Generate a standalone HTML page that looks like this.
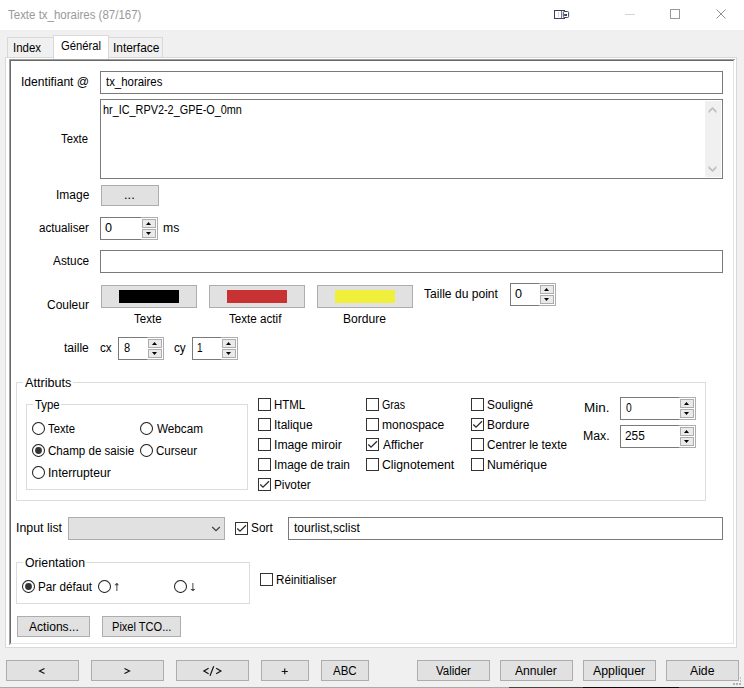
<!DOCTYPE html>
<html><head><meta charset="utf-8"><title>Texte tx_horaires</title>
<style>
html,body{margin:0;padding:0}
body{width:744px;height:688px;background:#f0f0f0;position:relative;overflow:hidden;font-family:"Liberation Sans",sans-serif;font-size:12px;color:#000}
body>div,body>svg,body>span{position:absolute;box-sizing:content-box}
body>span{white-space:nowrap;line-height:14px;transform-origin:0 0;display:block}
</style></head><body>
<div style="left:0px;top:0px;width:744px;height:30px;background:#fff"></div>
<svg style="left:550px;top:6px" width="24" height="18" viewBox="0 0 24 18"><rect x="4.5" y="4.5" width="10" height="8" fill="#fff" stroke="#3d4158" stroke-width="1"/><rect x="8" y="6" width="1" height="5" fill="#d8d8de"/><rect x="11" y="5" width="1" height="7" fill="#777a8c"/><rect x="13.3" y="5.5" width="5.3" height="6" rx="1" fill="#fff" stroke="#3d4158" stroke-width="1"/><rect x="14.2" y="8" width="2.8" height="2" fill="#3d4158"/></svg>
<div style="left:625px;top:14px;width:10px;height:1px;background:#d6d6d6"></div>
<div style="left:670px;top:9px;width:8px;height:8px;border:1px solid #999"></div>
<svg style="left:714px;top:7px" width="14" height="14" viewBox="0 0 14 14"><path d="M2.5 2.5 L11.5 11.5 M11.5 2.5 L2.5 11.5" stroke="#8f8f8f" stroke-width="1" fill="none"/></svg>
<div style="left:5px;top:57px;width:730px;height:589px;border:1px solid #d9d9d9;background:#fff;"></div>
<div style="left:9px;top:59px;width:725px;height:585px;border-left:1px solid #a0a0a0;border-top:1px solid #a0a0a0;background:#fff"></div>
<div style="left:10px;top:60px;width:722px;height:582px;border-left:1px solid #696969;border-top:1px solid #696969;border-right:1px solid #e3e3e3;border-bottom:1px solid #e3e3e3;background:#fff"></div>
<div style="left:7px;top:37px;width:46px;height:19px;border:1px solid #d9d9d9;border-bottom:none;background:#f0f0f0"></div>
<div style="left:108px;top:37px;width:54px;height:19px;border:1px solid #d9d9d9;border-bottom:none;border-left:none;background:#f0f0f0"></div>
<div style="left:53px;top:35px;width:54px;height:23px;border:1px solid #d9d9d9;border-bottom:none;background:#fff"></div>
<div style="left:100px;top:71px;width:621px;height:21px;border:1px solid #7a7a7a;background:#fff;"></div>
<div style="left:100px;top:99px;width:621px;height:78px;border:1px solid #7a7a7a;background:#fff;"></div>
<div style="left:705px;top:101px;width:16px;height:76px;background:#f0f0f0"></div>
<svg style="left:705px;top:101px" width="16" height="16" viewBox="0 0 16 16"><path d="M7.5 5.9 L11.4 9.8 L11.4 12.2 L7.5 8.3 L3.6 12.2 L3.6 9.8 Z" fill="#bdbdbd"/></svg>
<svg style="left:705px;top:161px" width="16" height="16" viewBox="0 0 16 16"><path d="M3.6 4.8 L7.5 8.7 L11.4 4.8 L11.4 7.2 L7.5 11.1 L3.6 7.2 Z" fill="#bdbdbd"/></svg>
<div style="left:100px;top:250px;width:621px;height:21px;border:1px solid #7a7a7a;background:#fff;"></div>
<div style="left:288px;top:517px;width:433px;height:21px;border:1px solid #7a7a7a;background:#fff;"></div>
<div style="left:100px;top:217px;width:56px;height:21px;border:1px solid #7a7a7a;background:#fff;"></div>
<div style="left:141px;top:217px;width:17px;height:1px;background:#abadb3"></div>
<div style="left:141px;top:239px;width:17px;height:1px;background:#abadb3"></div>
<div style="left:157px;top:217px;width:1px;height:23px;background:#abadb3"></div>
<div style="left:142px;top:219px;width:12px;height:7px;border:1px solid #adadad;background:#eaeaea;"></div>
<div style="left:142px;top:229px;width:12px;height:7px;border:1px solid #adadad;background:#eaeaea;"></div>
<svg style="left:142px;top:219px" width="14" height="9" viewBox="0 0 14 9"><path d="M4 6 L9 6 L6.5 3 Z" fill="#000"/></svg>
<svg style="left:142px;top:229px" width="14" height="9" viewBox="0 0 14 9"><path d="M4 3 L9 3 L6.5 6 Z" fill="#000"/></svg>
<div style="left:510px;top:283px;width:44px;height:21px;border:1px solid #7a7a7a;background:#fff;"></div>
<div style="left:539px;top:283px;width:17px;height:1px;background:#abadb3"></div>
<div style="left:539px;top:305px;width:17px;height:1px;background:#abadb3"></div>
<div style="left:555px;top:283px;width:1px;height:23px;background:#abadb3"></div>
<div style="left:540px;top:285px;width:12px;height:7px;border:1px solid #adadad;background:#eaeaea;"></div>
<div style="left:540px;top:295px;width:12px;height:7px;border:1px solid #adadad;background:#eaeaea;"></div>
<svg style="left:540px;top:285px" width="14" height="9" viewBox="0 0 14 9"><path d="M4 6 L9 6 L6.5 3 Z" fill="#000"/></svg>
<svg style="left:540px;top:295px" width="14" height="9" viewBox="0 0 14 9"><path d="M4 3 L9 3 L6.5 6 Z" fill="#000"/></svg>
<div style="left:118px;top:337px;width:44px;height:21px;border:1px solid #7a7a7a;background:#fff;"></div>
<div style="left:147px;top:337px;width:17px;height:1px;background:#abadb3"></div>
<div style="left:147px;top:359px;width:17px;height:1px;background:#abadb3"></div>
<div style="left:163px;top:337px;width:1px;height:23px;background:#abadb3"></div>
<div style="left:148px;top:339px;width:12px;height:7px;border:1px solid #adadad;background:#eaeaea;"></div>
<div style="left:148px;top:349px;width:12px;height:7px;border:1px solid #adadad;background:#eaeaea;"></div>
<svg style="left:148px;top:339px" width="14" height="9" viewBox="0 0 14 9"><path d="M4 6 L9 6 L6.5 3 Z" fill="#000"/></svg>
<svg style="left:148px;top:349px" width="14" height="9" viewBox="0 0 14 9"><path d="M4 3 L9 3 L6.5 6 Z" fill="#000"/></svg>
<div style="left:192px;top:337px;width:44px;height:21px;border:1px solid #7a7a7a;background:#fff;"></div>
<div style="left:221px;top:337px;width:17px;height:1px;background:#abadb3"></div>
<div style="left:221px;top:359px;width:17px;height:1px;background:#abadb3"></div>
<div style="left:237px;top:337px;width:1px;height:23px;background:#abadb3"></div>
<div style="left:222px;top:339px;width:12px;height:7px;border:1px solid #adadad;background:#eaeaea;"></div>
<div style="left:222px;top:349px;width:12px;height:7px;border:1px solid #adadad;background:#eaeaea;"></div>
<svg style="left:222px;top:339px" width="14" height="9" viewBox="0 0 14 9"><path d="M4 6 L9 6 L6.5 3 Z" fill="#000"/></svg>
<svg style="left:222px;top:349px" width="14" height="9" viewBox="0 0 14 9"><path d="M4 3 L9 3 L6.5 6 Z" fill="#000"/></svg>
<div style="left:620px;top:397px;width:74px;height:21px;border:1px solid #7a7a7a;background:#fff;"></div>
<div style="left:679px;top:397px;width:17px;height:1px;background:#abadb3"></div>
<div style="left:679px;top:419px;width:17px;height:1px;background:#abadb3"></div>
<div style="left:695px;top:397px;width:1px;height:23px;background:#abadb3"></div>
<div style="left:680px;top:399px;width:12px;height:7px;border:1px solid #adadad;background:#eaeaea;"></div>
<div style="left:680px;top:409px;width:12px;height:7px;border:1px solid #adadad;background:#eaeaea;"></div>
<svg style="left:680px;top:399px" width="14" height="9" viewBox="0 0 14 9"><path d="M4 6 L9 6 L6.5 3 Z" fill="#000"/></svg>
<svg style="left:680px;top:409px" width="14" height="9" viewBox="0 0 14 9"><path d="M4 3 L9 3 L6.5 6 Z" fill="#000"/></svg>
<div style="left:620px;top:425px;width:74px;height:21px;border:1px solid #7a7a7a;background:#fff;"></div>
<div style="left:679px;top:425px;width:17px;height:1px;background:#abadb3"></div>
<div style="left:679px;top:447px;width:17px;height:1px;background:#abadb3"></div>
<div style="left:695px;top:425px;width:1px;height:23px;background:#abadb3"></div>
<div style="left:680px;top:427px;width:12px;height:7px;border:1px solid #adadad;background:#eaeaea;"></div>
<div style="left:680px;top:437px;width:12px;height:7px;border:1px solid #adadad;background:#eaeaea;"></div>
<svg style="left:680px;top:427px" width="14" height="9" viewBox="0 0 14 9"><path d="M4 6 L9 6 L6.5 3 Z" fill="#000"/></svg>
<svg style="left:680px;top:437px" width="14" height="9" viewBox="0 0 14 9"><path d="M4 3 L9 3 L6.5 6 Z" fill="#000"/></svg>
<div style="left:101px;top:185px;width:56px;height:19px;border:1px solid #adadad;background:#e1e1e1;"></div>
<div style="left:101px;top:285px;width:94px;height:21px;border:1px solid #adadad;background:#e1e1e1;"></div>
<div style="left:119px;top:290px;width:60px;height:13px;background:#000"></div>
<div style="left:209px;top:285px;width:94px;height:21px;border:1px solid #adadad;background:#e1e1e1;"></div>
<div style="left:227px;top:290px;width:60px;height:13px;background:#c83232"></div>
<div style="left:317px;top:285px;width:94px;height:21px;border:1px solid #adadad;background:#e1e1e1;"></div>
<div style="left:335px;top:290px;width:60px;height:13px;background:#f0f03c"></div>
<div style="left:17px;top:616px;width:71px;height:19px;border:1px solid #adadad;background:#e1e1e1;"></div>
<div style="left:102px;top:616px;width:77px;height:19px;border:1px solid #adadad;background:#e1e1e1;"></div>
<div style="left:6px;top:660px;width:71px;height:19px;border:1px solid #adadad;background:#e1e1e1;"></div>
<div style="left:91px;top:660px;width:71px;height:19px;border:1px solid #adadad;background:#e1e1e1;"></div>
<div style="left:176px;top:660px;width:71px;height:19px;border:1px solid #adadad;background:#e1e1e1;"></div>
<div style="left:261px;top:660px;width:46px;height:19px;border:1px solid #adadad;background:#e1e1e1;"></div>
<div style="left:321px;top:660px;width:46px;height:19px;border:1px solid #adadad;background:#e1e1e1;"></div>
<div style="left:417px;top:660px;width:71px;height:19px;border:1px solid #adadad;background:#e1e1e1;"></div>
<div style="left:500px;top:660px;width:71px;height:19px;border:1px solid #adadad;background:#e1e1e1;"></div>
<div style="left:583px;top:660px;width:71px;height:19px;border:1px solid #adadad;background:#e1e1e1;"></div>
<div style="left:666px;top:660px;width:71px;height:19px;border:1px solid #adadad;background:#e1e1e1;"></div>
<div style="left:68px;top:517px;width:155px;height:21px;border:1px solid #adadad;background:#e1e1e1;"></div>
<svg style="left:208px;top:522px" width="16" height="12" viewBox="0 0 16 12"><path d="M4.2 5 L8 8.7 L11.8 5" stroke="#404040" stroke-width="1.2" fill="none"/></svg>
<div style="left:16px;top:382px;width:688px;height:117px;border:1px solid #dcdcdc;background:transparent;"></div>
<div style="left:23px;top:382px;width:50px;height:1px;background:#fff"></div>
<div style="left:26px;top:404px;width:220px;height:84px;border:1px solid #dcdcdc;background:transparent;"></div>
<div style="left:33px;top:404px;width:28px;height:1px;background:#fff"></div>
<div style="left:16px;top:562px;width:232px;height:40px;border:1px solid #dcdcdc;background:transparent;"></div>
<div style="left:23px;top:562px;width:63px;height:1px;background:#fff"></div>
<svg style="left:32px;top:422px" width="13" height="13" viewBox="0 0 13 13"><circle cx="6.5" cy="6.5" r="6" fill="#fff" stroke="#2e2e2e" stroke-width="1.07"/></svg>
<svg style="left:32px;top:444px" width="13" height="13" viewBox="0 0 13 13"><circle cx="6.5" cy="6.5" r="6" fill="#fff" stroke="#2e2e2e" stroke-width="1.07"/><circle cx="6.5" cy="6.5" r="3.4" fill="#333"/></svg>
<svg style="left:32px;top:466px" width="13" height="13" viewBox="0 0 13 13"><circle cx="6.5" cy="6.5" r="6" fill="#fff" stroke="#2e2e2e" stroke-width="1.07"/></svg>
<svg style="left:140px;top:422px" width="13" height="13" viewBox="0 0 13 13"><circle cx="6.5" cy="6.5" r="6" fill="#fff" stroke="#2e2e2e" stroke-width="1.07"/></svg>
<svg style="left:140px;top:444px" width="13" height="13" viewBox="0 0 13 13"><circle cx="6.5" cy="6.5" r="6" fill="#fff" stroke="#2e2e2e" stroke-width="1.07"/></svg>
<svg style="left:22px;top:580px" width="13" height="13" viewBox="0 0 13 13"><circle cx="6.5" cy="6.5" r="6" fill="#fff" stroke="#2e2e2e" stroke-width="1.07"/><circle cx="6.5" cy="6.5" r="3.4" fill="#333"/></svg>
<svg style="left:98px;top:580px" width="13" height="13" viewBox="0 0 13 13"><circle cx="6.5" cy="6.5" r="6" fill="#fff" stroke="#2e2e2e" stroke-width="1.07"/></svg>
<svg style="left:174px;top:580px" width="13" height="13" viewBox="0 0 13 13"><circle cx="6.5" cy="6.5" r="6" fill="#fff" stroke="#2e2e2e" stroke-width="1.07"/></svg>
<svg style="left:258px;top:398px" width="13" height="13" viewBox="0 0 13 13"><rect x="0.5" y="0.5" width="12" height="12" fill="#fff" stroke="#333" stroke-width="1"/></svg>
<svg style="left:258px;top:418px" width="13" height="13" viewBox="0 0 13 13"><rect x="0.5" y="0.5" width="12" height="12" fill="#fff" stroke="#333" stroke-width="1"/></svg>
<svg style="left:258px;top:438px" width="13" height="13" viewBox="0 0 13 13"><rect x="0.5" y="0.5" width="12" height="12" fill="#fff" stroke="#333" stroke-width="1"/></svg>
<svg style="left:258px;top:458px" width="13" height="13" viewBox="0 0 13 13"><rect x="0.5" y="0.5" width="12" height="12" fill="#fff" stroke="#333" stroke-width="1"/></svg>
<svg style="left:258px;top:478px" width="13" height="13" viewBox="0 0 13 13"><rect x="0.5" y="0.5" width="12" height="12" fill="#fff" stroke="#333" stroke-width="1"/><path d="M2.3 6.5 L5 9.2 L11 3.2" stroke="#2a2a2a" stroke-width="1.25" fill="none"/></svg>
<svg style="left:366px;top:398px" width="13" height="13" viewBox="0 0 13 13"><rect x="0.5" y="0.5" width="12" height="12" fill="#fff" stroke="#333" stroke-width="1"/></svg>
<svg style="left:366px;top:418px" width="13" height="13" viewBox="0 0 13 13"><rect x="0.5" y="0.5" width="12" height="12" fill="#fff" stroke="#333" stroke-width="1"/></svg>
<svg style="left:366px;top:438px" width="13" height="13" viewBox="0 0 13 13"><rect x="0.5" y="0.5" width="12" height="12" fill="#fff" stroke="#333" stroke-width="1"/><path d="M2.3 6.5 L5 9.2 L11 3.2" stroke="#2a2a2a" stroke-width="1.25" fill="none"/></svg>
<svg style="left:366px;top:458px" width="13" height="13" viewBox="0 0 13 13"><rect x="0.5" y="0.5" width="12" height="12" fill="#fff" stroke="#333" stroke-width="1"/></svg>
<svg style="left:471px;top:398px" width="13" height="13" viewBox="0 0 13 13"><rect x="0.5" y="0.5" width="12" height="12" fill="#fff" stroke="#333" stroke-width="1"/></svg>
<svg style="left:471px;top:418px" width="13" height="13" viewBox="0 0 13 13"><rect x="0.5" y="0.5" width="12" height="12" fill="#fff" stroke="#333" stroke-width="1"/><path d="M2.3 6.5 L5 9.2 L11 3.2" stroke="#2a2a2a" stroke-width="1.25" fill="none"/></svg>
<svg style="left:471px;top:438px" width="13" height="13" viewBox="0 0 13 13"><rect x="0.5" y="0.5" width="12" height="12" fill="#fff" stroke="#333" stroke-width="1"/></svg>
<svg style="left:471px;top:458px" width="13" height="13" viewBox="0 0 13 13"><rect x="0.5" y="0.5" width="12" height="12" fill="#fff" stroke="#333" stroke-width="1"/></svg>
<svg style="left:235px;top:522px" width="13" height="13" viewBox="0 0 13 13"><rect x="0.5" y="0.5" width="12" height="12" fill="#fff" stroke="#333" stroke-width="1"/><path d="M2.3 6.5 L5 9.2 L11 3.2" stroke="#2a2a2a" stroke-width="1.25" fill="none"/></svg>
<svg style="left:260px;top:573px" width="13" height="13" viewBox="0 0 13 13"><rect x="0.5" y="0.5" width="12" height="12" fill="#fff" stroke="#333" stroke-width="1"/></svg>
<svg style="left:112px;top:581px" width="10" height="12" viewBox="0 0 10 12"><rect x="4" y="4" width="1" height="6" fill="#8c8c8c"/><rect x="5" y="4" width="1" height="6" fill="#b8b8b8"/><path d="M2.4 4.3 L6.9 4.3 L5.3 2.1 L4.5 2.1 Z" fill="#4a4a4a"/></svg>
<svg style="left:188px;top:581px" width="10" height="12" viewBox="0 0 10 12"><rect x="4" y="2" width="1" height="6" fill="#8c8c8c"/><rect x="5" y="2" width="1" height="6" fill="#b8b8b8"/><path d="M2.3 7.9 L7.2 7.9 L5.5 10 L4.6 10 Z" fill="#4a4a4a"/></svg>
<svg style="left:36px;top:665px" width="12" height="12" viewBox="0 0 12 12"><path d="M8.5 3.5 L3.5 6 L8.5 8.5" stroke="#111" stroke-width="1.2" fill="none"/></svg>
<svg style="left:121px;top:665px" width="12" height="12" viewBox="0 0 12 12"><path d="M3.5 3.5 L8.5 6 L3.5 8.5" stroke="#111" stroke-width="1.2" fill="none"/></svg>
<svg style="left:200px;top:664px" width="26" height="14" viewBox="0 0 26 14"><path d="M8.6 4.3 L3.9 7 L8.6 9.7 M13.7 2.2 L10 11.9 M16.2 4.3 L20.9 7 L16.2 9.7" stroke="#111" stroke-width="1.2" fill="none"/></svg>
<svg style="left:279px;top:665px" width="12" height="12" viewBox="0 0 12 12"><path d="M2.7 6.5 L8.8 6.5 M5.75 3.6 L5.75 9.3" stroke="#111" stroke-width="1.15" fill="none"/></svg>
<div style="left:733px;top:683px;width:2px;height:2px;background:#b2b2b2"></div>
<div style="left:736px;top:683px;width:2px;height:2px;background:#b2b2b2"></div>
<div style="left:739px;top:683px;width:2px;height:2px;background:#b2b2b2"></div>
<div style="left:740px;top:680px;width:1px;height:2px;background:#bebebe"></div>
<div style="left:740px;top:677px;width:1px;height:2px;background:#bebebe"></div>
<div style="left:0px;top:687px;width:509px;height:1px;background:#aaaaaa"></div>
<div style="left:509px;top:687px;width:74px;height:1px;background:#3f4a40"></div>
<div style="left:583px;top:687px;width:96px;height:1px;background:#0c0c0c"></div>
<div style="left:679px;top:687px;width:65px;height:1px;background:#46564a"></div>
<span style="left:7.66px;top:8px;color:#999;transform:scaleX(0.9568)">Texte tx_horaires (87/167)</span>
<span style="left:12.77px;top:41px;transform:scaleX(0.9571)">Index</span>
<span style="left:60.88px;top:39px;transform:scaleX(0.9388)">Général</span>
<span style="left:113.21px;top:41px;transform:scaleX(0.9928)">Interface</span>
<span style="left:21.18px;top:75px;transform:scaleX(1.0083)">Identifiant @</span>
<span style="left:106.34px;top:75px;transform:scaleX(0.9503)">tx_horaires</span>
<span style="left:102.68px;top:103px;transform:scaleX(0.9055)">hr_IC_RPV2-2_GPE-O_0mn</span>
<span style="left:60.70px;top:132px;transform:scaleX(0.9375)">Texte</span>
<span style="left:55.68px;top:188px;transform:scaleX(0.9992)">Image</span>
<span style="left:124.01px;top:188px;transform:scaleX(1.0720)">...</span>
<span style="left:38.95px;top:221px;transform:scaleX(0.9710)">actualiser</span>
<span style="left:105.06px;top:221px;transform:scaleX(1.0508)">0</span>
<span style="left:162.99px;top:221px;transform:scaleX(1.0155)">ms</span>
<span style="left:53.10px;top:254px;transform:scaleX(0.9847)">Astuce</span>
<span style="left:46.96px;top:298px;transform:scaleX(0.9977)">Couleur</span>
<span style="left:134.20px;top:312px;transform:scaleX(0.9600)">Texte</span>
<span style="left:229.20px;top:312px;transform:scaleX(0.9702)">Texte actif</span>
<span style="left:342.68px;top:312px;transform:scaleX(1.0081)">Bordure</span>
<span style="left:423.70px;top:287px;transform:scaleX(1.0076)">Taille du point</span>
<span style="left:515.06px;top:287px;transform:scaleX(1.0508)">0</span>
<span style="left:64.00px;top:341px;transform:scaleX(1.0046)">taille</span>
<span style="left:100.21px;top:341px;transform:scaleX(0.9738)">cx</span>
<span style="left:123.84px;top:341px;transform:scaleX(0.9225)">8</span>
<span style="left:173.53px;top:341px;transform:scaleX(0.9763)">cy</span>
<span style="left:197.08px;top:341px;transform:scaleX(0.8367)">1</span>
<span style="left:25.00px;top:376px;transform:scaleX(1.0529)">Attributs</span>
<span style="left:34.70px;top:398px;transform:scaleX(0.9470)">Type</span>
<span style="left:48.10px;top:422px;transform:scaleX(0.9417)">Texte</span>
<span style="left:47.93px;top:444px;transform:scaleX(0.9637)">Champ de saisie</span>
<span style="left:47.58px;top:466px;transform:scaleX(1.0119)">Interrupteur</span>
<span style="left:156.50px;top:422px;transform:scaleX(0.9754)">Webcam</span>
<span style="left:156.03px;top:444px;transform:scaleX(0.9631)">Curseur</span>
<span style="left:273.86px;top:398px;transform:scaleX(0.9561)">HTML</span>
<span style="left:273.83px;top:418px;transform:scaleX(0.9965)">Italique</span>
<span style="left:273.65px;top:438px;transform:scaleX(1.0159)">Image miroir</span>
<span style="left:273.84px;top:458px;transform:scaleX(0.9905)">Image de train</span>
<span style="left:273.79px;top:478px;transform:scaleX(0.9822)">Pivoter</span>
<span style="left:381.89px;top:398px;transform:scaleX(0.8896)">Gras</span>
<span style="left:381.59px;top:418px;transform:scaleX(1.0036)">monospace</span>
<span style="left:382.63px;top:438px;transform:scaleX(0.9988)">Afficher</span>
<span style="left:381.94px;top:458px;transform:scaleX(1.0215)">Clignotement</span>
<span style="left:486.64px;top:398px;transform:scaleX(0.9859)">Souligné</span>
<span style="left:486.77px;top:418px;transform:scaleX(0.9917)">Bordure</span>
<span style="left:486.81px;top:438px;transform:scaleX(0.9737)">Centrer le texte</span>
<span style="left:486.70px;top:458px;transform:scaleX(1.0222)">Numérique</span>
<span style="left:584.25px;top:401px;transform:scaleX(1.1198)">Min.</span>
<span style="left:625.94px;top:401px;transform:scaleX(0.8555)">0</span>
<span style="left:582.52px;top:429px;transform:scaleX(1.0262)">Max.</span>
<span style="left:625.35px;top:429px;transform:scaleX(0.9870)">255</span>
<span style="left:16.01px;top:521px;transform:scaleX(1.0298)">Input list</span>
<span style="left:251.10px;top:521px;transform:scaleX(0.9851)">Sort</span>
<span style="left:294.00px;top:521px;transform:scaleX(1.0071)">tourlist,sclist</span>
<span style="left:24.80px;top:556px;transform:scaleX(1.0214)">Orientation</span>
<span style="left:38.21px;top:580px;transform:scaleX(0.9743)">Par défaut</span>
<span style="left:275.83px;top:573px;transform:scaleX(0.9725)">Réinitialiser</span>
<span style="left:29.00px;top:620px;transform:scaleX(1.0081)">Actions...</span>
<span style="left:111.74px;top:620px;transform:scaleX(0.9219)">Pixel TCO...</span>
<span style="left:333.15px;top:664px;transform:scaleX(0.9585)">ABC</span>
<span style="left:436.00px;top:664px;transform:scaleX(0.9576)">Valider</span>
<span style="left:515.49px;top:664px;transform:scaleX(1.0096)">Annuler</span>
<span style="left:592.98px;top:664px;transform:scaleX(1.0279)">Appliquer</span>
<span style="left:690.18px;top:664px;transform:scaleX(1.0173)">Aide</span>
</body></html>
